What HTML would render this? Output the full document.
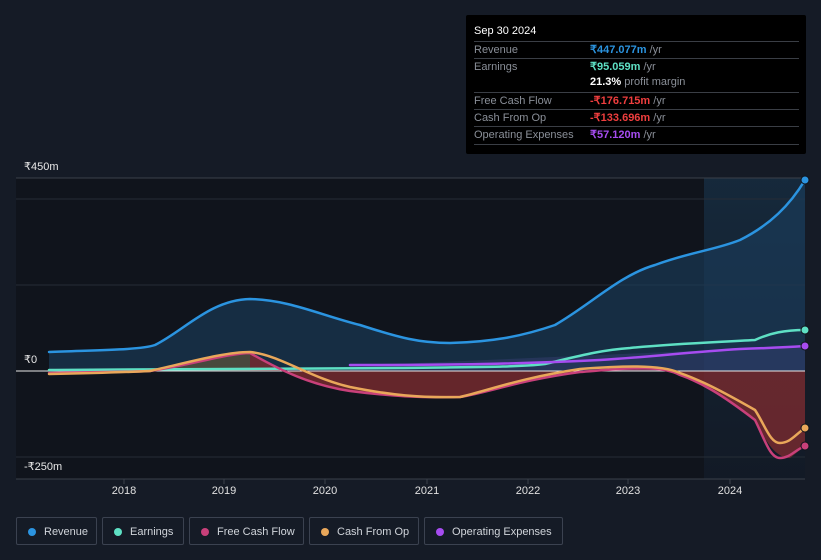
<!DOCTYPE html>
<html><head><meta charset="utf-8"><style>
body{margin:0;width:821px;height:560px;background:#151b26;font-family:"Liberation Sans","Noto Sans CJK SC",sans-serif;overflow:hidden;position:relative}
.tt{position:absolute;left:466px;top:15px;width:340px;height:139px;background:#000;border-radius:2px;font-size:11px;color:#8a8f98}
.tt .h{position:absolute;left:8px;top:10px;color:#fff;font-size:11px}
.row{position:absolute;left:8px;width:325px;border-top:1px solid #3a3e45;height:17px;line-height:17px}
.row span.v{position:absolute;left:116px;font-weight:bold}
.lbl{position:absolute;color:#e8e8e8;font-size:11px}
.yr{position:absolute;top:485px;color:#e0e0e0;font-size:11px;transform:translateX(-50%)}
.lg{position:absolute;top:517px;height:28px;border:1px solid #3b4250;border-radius:2px;color:#d0d4da;font-size:11px;line-height:28px;box-sizing:border-box;padding-left:27px}
.lg i{position:absolute;left:11px;top:10px;width:8px;height:8px;border-radius:50%}
</style></head><body>
<svg width="821" height="560" style="position:absolute;left:0;top:0">
<defs><linearGradient id="hl" x1="0" x2="0" y1="0" y2="1"><stop offset="0" stop-color="#1a3a55" stop-opacity=".55"/><stop offset="1" stop-color="#152030" stop-opacity=".5"/></linearGradient></defs>
<rect x="16" y="178" width="789" height="301" fill="#10141c"/>
<rect x="704" y="178" width="101" height="301" fill="url(#hl)"/>
<line x1="16" y1="178" x2="805" y2="178" stroke="#3a404a"/>
<line x1="16" y1="199" x2="805" y2="199" stroke="#262c36"/>
<line x1="16" y1="285" x2="805" y2="285" stroke="#262c36"/>
<line x1="16" y1="457" x2="805" y2="457" stroke="#262c36"/>
<line x1="16" y1="479" x2="805" y2="479" stroke="#3a404a"/>
<path d="M49,352 C100,350 140,350 155,345 C185,330 210,300 250,299 C290,300 320,315 360,325 C400,338 420,343 450,343 C490,342 520,337 555,325 C590,305 620,275 655,265 C690,252 715,250 740,240 C770,225 790,205 805,180 L805,371 L49,371Z" fill="#1b3d5e" opacity=".6"/>
<path d="M49,371 L150,371 C200,362 230,353 250,353 L250,371Z" fill="#6b5a3a" opacity=".6"/>
<path d="M250,353 C280,370 310,385 350,390 C390,396 420,398 460,397 C490,392 520,380 580,372 C620,369 660,366 680,373 C700,382 720,393 755,420 C765,440 775,458 790,458 L805,446 L805,371 L250,371Z" fill="#7a2a30" opacity=".8"/>
<path d="M350,366 L805,346 L805,371 L350,371Z" fill="#4a4a90" opacity=".3"/>
<line x1="16" y1="371" x2="805" y2="371" stroke="#e8e8e8" stroke-width="1"/>
<g fill="none" stroke-width="2.5" stroke-linecap="round">
<path d="M49,370 C150,369 250,369 400,368 C480,367 520,367 545,364 C575,357 600,350 630,348 C670,344 700,343 755,340 C770,333 785,330 805,330" stroke="#5ee0c4"/>
<path d="M350,365 C450,365 520,364 600,360 C650,357 690,352 740,349 C770,348 790,347 805,346" stroke="#a64cf0"/>
<path d="M49,373 C100,372 130,372 150,371 C190,365 230,353 250,353 C280,370 310,385 350,391 C390,396 420,398 460,397 C490,392 520,380 580,372 C620,369 660,364 680,375 C700,382 720,393 755,420 C765,440 770,458 780,458 C790,458 795,450 805,446" stroke="#c8407a"/>
<path d="M49,374 C100,373 130,372 150,371 C190,362 225,352 250,352 C280,355 310,378 350,387 C390,395 420,398 460,397 C490,390 520,378 580,369 C620,366 660,364 680,373 C700,380 720,390 755,410 C765,425 770,443 780,443 C790,443 795,435 805,428" stroke="#e9a75a"/>
<path d="M49,352 C100,350 140,350 155,345 C185,330 210,300 250,299 C290,300 320,315 360,325 C400,338 420,343 450,343 C490,342 520,337 555,325 C590,305 620,275 655,265 C690,252 715,250 740,240 C770,225 790,205 805,180" stroke="#2b94e0"/>
</g>
<g stroke="#10141c" stroke-width="1"><circle cx="805" cy="180" r="4" fill="#2b94e0"/><circle cx="805" cy="330" r="4" fill="#5ee0c4"/><circle cx="805" cy="346" r="4" fill="#a64cf0"/><circle cx="805" cy="428" r="4" fill="#e9a75a"/><circle cx="805" cy="446" r="4" fill="#c8407a"/></g>
<g stroke="#3a404a"><line x1="124" y1="479" x2="124" y2="484"/><line x1="224" y1="479" x2="224" y2="484"/><line x1="325" y1="479" x2="325" y2="484"/><line x1="427" y1="479" x2="427" y2="484"/><line x1="528" y1="479" x2="528" y2="484"/><line x1="628" y1="479" x2="628" y2="484"/><line x1="730" y1="479" x2="730" y2="484"/></g>
</svg>
<div class="lbl" style="left:24px;top:160px">₹450m</div>
<div class="lbl" style="left:24px;top:353px">₹0</div>
<div class="lbl" style="left:24px;top:460px">-₹250m</div>
<div class="yr" style="left:124px">2018</div><div class="yr" style="left:224px">2019</div><div class="yr" style="left:325px">2020</div><div class="yr" style="left:427px">2021</div><div class="yr" style="left:528px">2022</div><div class="yr" style="left:628px">2023</div><div class="yr" style="left:730px">2024</div>
<div class="tt">
<div class="h">Sep 30 2024</div>
<div class="row" style="top:26px">Revenue<span class="v" style="color:#2b94e0">₹447.077m <span style="color:#8a8f98;font-weight:normal">/yr</span></span></div>
<div class="row" style="top:43px">Earnings<span class="v" style="color:#5ee0c4">₹95.059m <span style="color:#8a8f98;font-weight:normal">/yr</span></span></div>
<div style="position:absolute;left:124px;top:61px;color:#fff;font-weight:bold">21.3% <span style="color:#8a8f98;font-weight:normal">profit margin</span></div>
<div class="row" style="top:77px">Free Cash Flow<span class="v" style="color:#f03e3e">-₹176.715m <span style="color:#8a8f98;font-weight:normal">/yr</span></span></div>
<div class="row" style="top:94px">Cash From Op<span class="v" style="color:#f03e3e">-₹133.696m <span style="color:#8a8f98;font-weight:normal">/yr</span></span></div>
<div class="row" style="top:111px">Operating Expenses<span class="v" style="color:#a64cf0">₹57.120m <span style="color:#8a8f98;font-weight:normal">/yr</span></span></div>
<div class="row" style="top:129px;height:0"></div>
</div>
<div class="lg" style="left:16px;width:81px"><i style="background:#2b94e0"></i>Revenue</div>
<div class="lg" style="left:102px;width:82px"><i style="background:#5ee0c4"></i>Earnings</div>
<div class="lg" style="left:189px;width:115px"><i style="background:#c8407a"></i>Free Cash Flow</div>
<div class="lg" style="left:309px;width:110px"><i style="background:#e9a75a"></i>Cash From Op</div>
<div class="lg" style="left:424px;width:139px"><i style="background:#a64cf0"></i>Operating Expenses</div>
</body></html>
